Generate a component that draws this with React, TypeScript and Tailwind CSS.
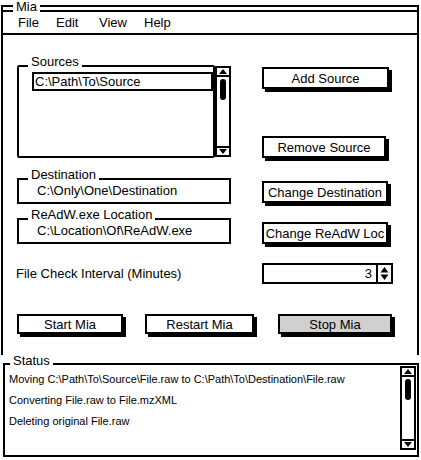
import React from "react";

function VScroll({ className }: { className: string }) {
  return (
    <div className={`flex flex-col border-2 border-black bg-white ${className}`}>
      <div className="h-[9px] border-b-2 border-black flex items-center justify-center">
        <svg width="8" height="5" viewBox="0 0 8 5">
          <path d="M0 5 L4 0 L8 5Z" fill="#000" />
        </svg>
      </div>
      <div className="mx-auto mt-[2px] w-[6px] h-[21px] rounded-[3px] bg-black" />
      <div className="flex-1" />
      <div className="h-[9px] border-t-2 border-black flex items-center justify-center">
        <svg width="8" height="5" viewBox="0 0 8 5">
          <path d="M0 0 L4 5 L8 0Z" fill="#000" />
        </svg>
      </div>
    </div>
  );
}

function Btn({ children, className }: { children: React.ReactNode; className: string }) {
  return (
    <div
      className={`flex items-center justify-center border-2 border-black shadow-[3px_3px_0_0_#000] text-[13px] leading-none whitespace-nowrap ${className}`}
    >
      {children}
    </div>
  );
}

function GroupLabel({ children, className }: { children: React.ReactNode; className: string }) {
  return (
    <span className={`absolute bg-white px-[3px] text-[13px] leading-[14px] whitespace-nowrap ${className}`}>
      {children}
    </span>
  );
}

export default function App() {
  return (
    <div className="w-[421px] h-[460px] bg-white overflow-hidden pt-[5px] text-black font-['Liberation_Sans',Arial,sans-serif]">
      {/* Window */}
      <div className="relative ml-[1px] w-[418px] h-[350px] border-2 border-b-0 border-black">
        <GroupLabel className="-top-[7px] left-[10px] leading-[12px]">Mia</GroupLabel>

        {/* Menu bar */}
        <div className="mt-[3px] -mx-[2px] h-[25px] border-2 border-black bg-white flex items-center pl-[15px] text-[13px]">
          <span className="w-[38px]">File</span>
          <span className="w-[43px]">Edit</span>
          <span className="w-[45px]">View</span>
          <span>Help</span>
        </div>

        <div className="pl-[14px]">
          {/* Sources */}
          <div className="mt-[30px] flex items-start">
            <div className="flex items-start w-[214px]">
              <div className="relative w-[198px] h-[93px] border-2 border-black rounded-[2px]">
                <GroupLabel className="-top-[12px] left-[9px]">Sources</GroupLabel>
                <div className="ml-[13px] mt-[5px] h-[19px] border-2 border-black flex items-center pl-[1px] text-[13px]">
                  {"C:\\Path\\To\\Source"}
                </div>
              </div>
              <VScroll className="w-[16px] h-[91px] mt-[1px]" />
            </div>
            <div className="ml-[31px] h-[93px] flex flex-col justify-between">
              <Btn className="mt-[2px] w-[127px] h-[22px]">Add Source</Btn>
              <Btn className="w-[124px] h-[22px]">Remove Source</Btn>
            </div>
          </div>

          {/* Destination */}
          <div className="mt-[20px] flex items-start">
            <div className="relative w-[214px] h-[26px] border-2 border-black flex items-center pl-[18px] text-[13px]">
              <GroupLabel className="-top-[12px] left-[9px]">Destination</GroupLabel>
              {"C:\\Only\\One\\Destination"}
            </div>
            <Btn className="ml-[31px] mt-[3px] w-[126px] h-[22px]">Change Destination</Btn>
          </div>

          {/* ReAdW */}
          <div className="mt-[14px] flex items-start">
            <div className="relative w-[214px] h-[26px] border-2 border-black flex items-center pl-[18px] text-[13px]">
              <GroupLabel className="-top-[12px] left-[9px]">ReAdW.exe Location</GroupLabel>
              {"C:\\Location\\Of\\ReAdW.exe"}
            </div>
            <Btn className="ml-[31px] mt-[4px] w-[126px] h-[22px]">Change ReAdW Loc</Btn>
          </div>

          {/* Interval */}
          <div className="mt-[19px] flex items-center">
            <span className="-ml-[1px] w-[246px] text-[13px]">File Check Interval (Minutes)</span>
            <div className="w-[116px] h-[21px] border-2 border-black flex items-center justify-end pr-[4px] text-[13px]">
              3
            </div>
            <div className="w-[15px] h-[21px] border-2 border-l-0 border-black flex items-center justify-center">
              <svg width="9" height="15" viewBox="0 0 9 15">
                <path d="M0.5 6.5 L4.5 1 L8.5 6.5Z" fill="#000" />
                <path d="M0.5 8.5 L4.5 14 L8.5 8.5Z" fill="#000" />
              </svg>
            </div>
          </div>

          {/* Control buttons */}
          <div className="mt-[30px] flex items-start">
            <Btn className="w-[106px] h-[20px]">Start Mia</Btn>
            <Btn className="ml-[22px] w-[109px] h-[20px]">Restart Mia</Btn>
            <Btn className="ml-[24px] w-[114px] h-[20px] bg-[#d0d0d0]">Stop Mia</Btn>
          </div>
        </div>
      </div>

      {/* Status */}
      <div className="relative mt-[8px] ml-[3px] w-[416px] h-[94px] border-2 border-black flex">
        <GroupLabel className="-top-[11px] left-[5px]">Status</GroupLabel>
        <div className="flex-1 pl-[4px] pt-[4px] text-[11px] leading-[21px]">
          <div>{"Moving C:\\Path\\To\\Source\\File.raw to C:\\Path\\To\\Destination\\File.raw"}</div>
          <div>Converting File.raw to File.mzXML</div>
          <div>Deleting original File.raw</div>
        </div>
        <VScroll className="w-[16px] h-[84px] mt-[1px] mr-[1px]" />
      </div>
    </div>
  );
}
